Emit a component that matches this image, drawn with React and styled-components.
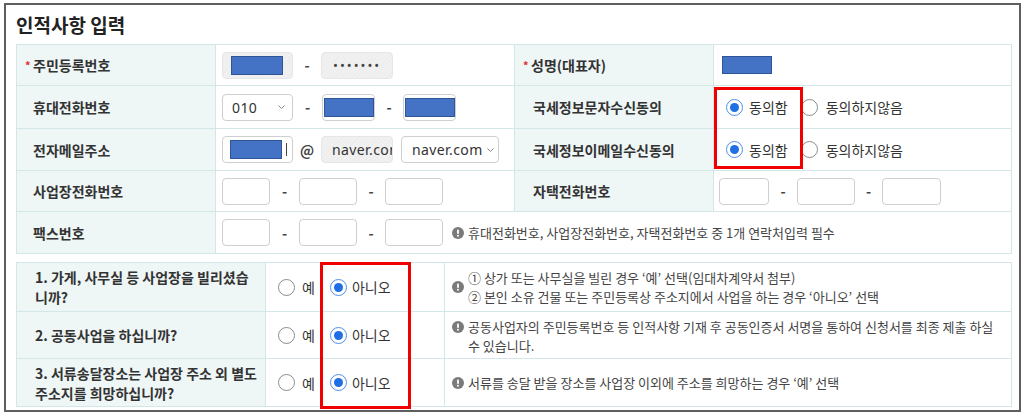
import styled, { createGlobalStyle } from "styled-components";

const GlobalStyle = createGlobalStyle`
    html, body {
        margin: 0;
        padding: 0;
        background: #ffffff;
    }
    body {
        font-family: "Noto Sans CJK KR", "Noto Sans", sans-serif;
        color: #333;
    }
`;

const Frame = styled.div`
    box-sizing: border-box;
    margin: 3px 0 0 4px;
    width: 1017px;
    height: 409px;
    border: 2px solid #5e5e5e;
    padding: 0 7px 0 10px;
    position: relative;
`;

const Title = styled.h2`
    margin: 0;
    height: 39px;
    line-height: 39px;
    font-size: 19px;
    font-weight: 700;
    color: #222;
`;

const Table = styled.div`
    position: relative;
    display: grid;
    grid-template-columns: ${(p) => p.$cols};
    grid-template-rows: ${(p) => p.$rows};
    gap: 1px;
    border: 1px solid #d3e6e8;
    background: #d3e6e8;
    margin-bottom: ${(p) => p.$mb || 0}px;
`;

const LabelCell = styled.div`
    background: #eef6f6;
    display: flex;
    align-items: center;
    padding-left: ${(p) => p.$pl || 16}px;
    font-size: 14px;
    font-weight: 600;
    color: #333;
    white-space: nowrap;
`;

const Star = styled.span`
    color: #e03030;
    font-size: 11px;
    width: 8px;
    margin-left: -8px;
`;

const QuestionCell = styled.div`
    background: #eef6f6;
    display: flex;
    align-items: center;
    padding-left: 18px;
    font-size: 14px;
    font-weight: 600;
    line-height: 20px;
    color: #333;
    white-space: nowrap;
`;

const ValueCell = styled.div`
    background: #fff;
    display: flex;
    align-items: center;
    padding-left: ${(p) => p.$pl || 6}px;
    grid-column: ${(p) => (p.$span ? `span ${p.$span}` : "auto")};
    font-size: 14px;
`;

const Box = styled.div`
    box-sizing: border-box;
    width: ${(p) => p.$w}px;
    height: 27px;
    border: 1px solid ${(p) => (p.$readonly ? "#e6e6e6" : "#cfcfcf")};
    border-radius: 4px;
    background: ${(p) =>
        p.$readonly
            ? "repeating-linear-gradient(135deg, #f1f1f1 0, #f1f1f1 2px, #ececec 2px, #ececec 3px)"
            : "#fff"};
    display: flex;
    align-items: center;
    padding: 0 ${(p) => p.$px ?? 8}px;
    font-family: "Noto Sans", sans-serif;
    font-size: 14px;
    letter-spacing: 0.4px;
    color: #333;
    overflow: hidden;
    white-space: nowrap;
    flex-shrink: 0;
`;

const Mask = styled.span`
    display: inline-block;
    box-sizing: border-box;
    width: ${(p) => p.$w}px;
    height: ${(p) => p.$h || 19}px;
    background: #4472c4;
    border: 1px solid #2f5597;
    flex-shrink: 0;
`;

const Caret = styled.span`
    display: inline-block;
    width: 1px;
    height: 13px;
    background: #444;
    margin-left: 4px;
    flex-shrink: 0;
`;

const Dots = styled.span`
    letter-spacing: 2px;
    font-size: 13px;
    color: #444;
`;

const SelectBox = styled(Box)`
    justify-content: space-between;
    padding: 0 ${(p) => p.$pr || 7}px 0 ${(p) => p.$pl || 9}px;
`;

const Sep = styled.span`
    width: ${(p) => p.$w || 28}px;
    text-align: center;
    font-size: 14px;
    font-weight: 700;
    color: #444;
    flex-shrink: 0;
`;

const RadioGroup = styled.label`
    display: inline-flex;
    align-items: center;
    margin-right: ${(p) => p.$mr || 0}px;
    font-size: 14px;
    color: #333;
    gap: ${(p) => p.$gap || 6}px;
    white-space: nowrap;
`;

const Circle = styled.span`
    box-sizing: border-box;
    width: 17px;
    height: 17px;
    border-radius: 50%;
    border: 1px solid ${(p) => (p.$checked ? "#4f8fea" : "#8c8c8c")};
    background: #fff;
    display: flex;
    align-items: center;
    justify-content: center;
    flex-shrink: 0;

    &::after {
        content: "";
        width: 9px;
        height: 9px;
        border-radius: 50%;
        background: ${(p) => (p.$checked ? "#1f6fe5" : "transparent")};
    }
`;

const NoteCell = styled.div`
    background: #fff;
    display: flex;
    align-items: ${(p) => (p.$top ? "flex-start" : "center")};
    padding: ${(p) => (p.$top ? "5px 0 0 7px" : "0 0 0 7px")};
    gap: 4px;
    font-size: 13px;
    line-height: 19px;
    color: #444;
    white-space: nowrap;
`;

const Note = styled.div`
    display: flex;
    align-items: flex-start;
    gap: 4px;
    font-size: 13px;
    line-height: 19px;
    color: #444;
    margin-left: ${(p) => p.$ml || 0}px;
    white-space: nowrap;
`;

const IconWrap = styled.span`
    display: inline-flex;
    height: 19px;
    align-items: center;
    flex-shrink: 0;
`;

const Highlight = styled.div`
    position: absolute;
    box-sizing: border-box;
    left: ${(p) => p.$x}px;
    top: ${(p) => p.$y}px;
    width: ${(p) => p.$w}px;
    height: ${(p) => p.$h}px;
    border: 3px solid #f00000;
    pointer-events: none;
`;

function InfoIcon() {
    return (
        <IconWrap>
            <svg width="12" height="12" viewBox="0 0 12 12">
                <circle cx="6" cy="6" r="6" fill="#7a7a7a" />
                <rect x="5.1" y="2.4" width="1.8" height="4.6" rx="0.8" fill="#fff" />
                <circle cx="6" cy="8.8" r="1" fill="#fff" />
            </svg>
        </IconWrap>
    );
}

function Chevron() {
    return (
        <svg width="7" height="4" viewBox="0 0 7 4" style={{ flexShrink: 0 }}>
            <path d="M0.5 0.5l3 3 3-3" fill="none" stroke="#888" strokeWidth="1" />
        </svg>
    );
}

function Radio({ checked, label, mr, gap }) {
    return (
        <RadioGroup $mr={mr} $gap={gap}>
            <Circle $checked={checked} />
            {label}
        </RadioGroup>
    );
}

function YesNo() {
    return (
        <ValueCell $pl={12}>
            <Radio label="예" mr={15} gap={7} />
            <Radio label="아니오" checked gap={5} />
        </ValueCell>
    );
}

export default function App() {
    return (
        <>
            <GlobalStyle />
            <Frame>
                <Title>인적사항 입력</Title>

                <Table $cols="198px 298px 198px 297px" $rows="40px 42px 41px 40px 41px" $mb={8}>
                    <LabelCell><Star>*</Star>주민등록번호</LabelCell>
                    <ValueCell>
                        <Box $w={71} $readonly $px={8}><Mask $w={52} /></Box>
                        <Sep>-</Sep>
                        <Box $w={72} $readonly $px={11}><Dots>•••••••</Dots></Box>
                    </ValueCell>
                    <LabelCell><Star>*</Star>성명(대표자)</LabelCell>
                    <ValueCell $pl={8}><Mask $w={50} $h={18} /></ValueCell>

                    <LabelCell>휴대전화번호</LabelCell>
                    <ValueCell>
                        <SelectBox $w={71}>010<Chevron /></SelectBox>
                        <Sep $w={29}>-</Sep>
                        <Box $w={53} $px={1}><Mask $w={50} /></Box>
                        <Sep>-</Sep>
                        <Box $w={53} $px={1}><Mask $w={50} /></Box>
                    </ValueCell>
                    <LabelCell $pl={18}>국세정보문자수신동의</LabelCell>
                    <ValueCell $pl={12}>
                        <Radio label="동의함" checked mr={13} />
                        <Radio label="동의하지않음" gap={8} />
                    </ValueCell>

                    <LabelCell>전자메일주소</LabelCell>
                    <ValueCell>
                        <Box $w={71} $px={7}><Mask $w={52} /><Caret /></Box>
                        <Sep>@</Sep>
                        <Box $w={72} $readonly $px={10}>naver.com</Box>
                        <Sep $w={8} />
                        <SelectBox $w={98} $pl={10} $pr={4}>naver.com<Chevron /></SelectBox>
                    </ValueCell>
                    <LabelCell $pl={18}>국세정보이메일수신동의</LabelCell>
                    <ValueCell $pl={12}>
                        <Radio label="동의함" checked mr={13} />
                        <Radio label="동의하지않음" gap={8} />
                    </ValueCell>

                    <LabelCell>사업장전화번호</LabelCell>
                    <ValueCell>
                        <Box $w={48} />
                        <Sep $w={29}>-</Sep>
                        <Box $w={58} />
                        <Sep>-</Sep>
                        <Box $w={58} />
                    </ValueCell>
                    <LabelCell $pl={18}>자택전화번호</LabelCell>
                    <ValueCell $pl={5}>
                        <Box $w={50} />
                        <Sep>-</Sep>
                        <Box $w={58} />
                        <Sep $w={27}>-</Sep>
                        <Box $w={59} />
                    </ValueCell>

                    <LabelCell>팩스번호</LabelCell>
                    <ValueCell $span={3}>
                        <Box $w={48} />
                        <Sep $w={29}>-</Sep>
                        <Box $w={58} />
                        <Sep>-</Sep>
                        <Box $w={58} />
                        <Note $ml={9}>
                            <InfoIcon />
                            휴대전화번호, 사업장전화번호, 자택전화번호 중 1개 연락처입력 필수
                        </Note>
                    </ValueCell>

                    <Highlight $x={697} $y={42} $w={89} $h={82} />
                </Table>

                <Table $cols="248px 178px 566px" $rows="48px 46px 47px">
                    <QuestionCell>1. 가게, 사무실 등 사업장을 빌리셨습<br />니까?</QuestionCell>
                    <YesNo />
                    <NoteCell>
                        <InfoIcon />
                        <div>
                            ① 상가 또는 사무실을 빌린 경우 ‘예’ 선택(임대차계약서 첨부)<br />
                            ② 본인 소유 건물 또는 주민등록상 주소지에서 사업을 하는 경우 ‘아니오’ 선택
                        </div>
                    </NoteCell>

                    <QuestionCell>2. 공동사업을 하십니까?</QuestionCell>
                    <YesNo />
                    <NoteCell $top>
                        <InfoIcon />
                        <div>
                            공동사업자의 주민등록번호 등 인적사항 기재 후 공동인증서 서명을 통하여 신청서를 최종 제출 하실<br />
                            수 있습니다.
                        </div>
                    </NoteCell>

                    <QuestionCell>3. 서류송달장소는 사업장 주소 외 별도<br />주소지를 희망하십니까?</QuestionCell>
                    <YesNo />
                    <NoteCell>
                        <InfoIcon />
                        서류를 송달 받을 장소를 사업장 이외에 주소를 희망하는 경우 ‘예’ 선택
                    </NoteCell>

                    <Highlight $x={303} $y={-1} $w={91} $h={147} />
                </Table>
            </Frame>
        </>
    );
}
